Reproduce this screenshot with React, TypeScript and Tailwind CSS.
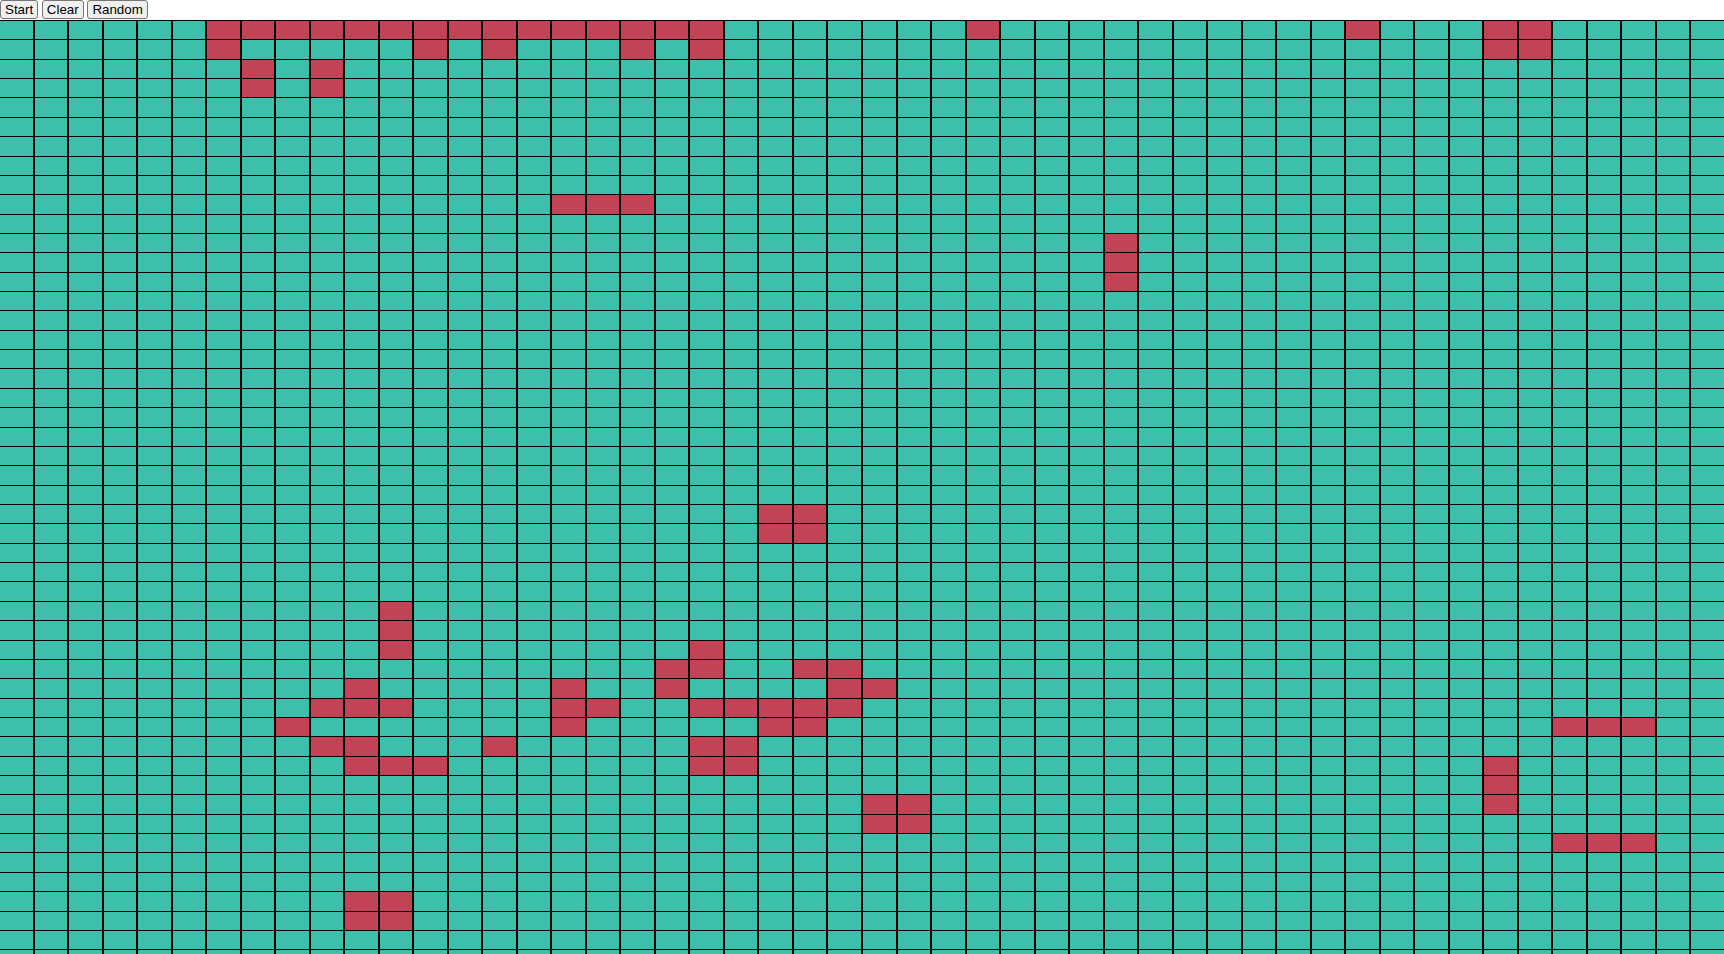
import React from "react";

const ROWS = 50;
const COLS = 50;

const alive: [number, number][] = [];
const add = (r: number, cols: number[]) => cols.forEach((c) => alive.push([r, c]));

add(0, [6, 7, 8, 9, 10, 11, 12, 13, 14, 15, 16, 17, 18, 19, 20, 28, 39, 43, 44]);
add(1, [6, 12, 14, 18, 20, 43, 44]);
add(2, [7, 9]);
add(3, [7, 9]);
add(9, [16, 17, 18]);
add(11, [32]);
add(12, [32]);
add(13, [32]);
add(25, [22, 23]);
add(26, [22, 23]);
add(30, [11]);
add(31, [11]);
add(32, [11, 20]);
add(33, [19, 20, 23, 24]);
add(34, [10, 16, 19, 24, 25]);
add(35, [9, 10, 11, 16, 17, 20, 21, 22, 23, 24]);
add(36, [8, 16, 22, 23, 45, 46, 47]);
add(37, [9, 10, 14, 20, 21]);
add(38, [10, 11, 12, 20, 21, 43]);
add(39, [43]);
add(40, [25, 26, 43]);
add(41, [25, 26]);
add(42, [45, 46, 47]);
add(45, [10, 11]);
add(46, [10, 11]);

const aliveSet = new Set(alive.map(([r, c]) => r * COLS + c));

export default function App() {
  const cells = [];
  for (let r = 0; r < ROWS; r++) {
    for (let c = 0; c < COLS; c++) {
      const on = aliveSet.has(r * COLS + c);
      cells.push(
        <div
          key={r * COLS + c}
          className={on ? "h-[18.37px] bg-[#c14355]" : "h-[18.37px] bg-[#3ebfab]"}
        />
      );
    }
  }
  const btn =
    "h-[19px] px-[4px] py-[1px] border border-[#767676] rounded-[3px] bg-[#efefef] text-[13.33px] leading-[15px] text-black";
  return (
    <div className="w-[1724px] bg-white font-['Liberation_Sans',Arial,sans-serif]">
      <div className="flex h-[20px] items-start gap-[3.7px]">
        <button className={btn}>Start</button>
        <button className={btn}>Clear</button>
        <button className={btn}>Random</button>
      </div>
      <div className="grid grid-cols-[repeat(50,minmax(0,1fr))] gap-x-[2px] gap-y-[1px] bg-black pt-[1px]">
        {cells}
      </div>
    </div>
  );
}
